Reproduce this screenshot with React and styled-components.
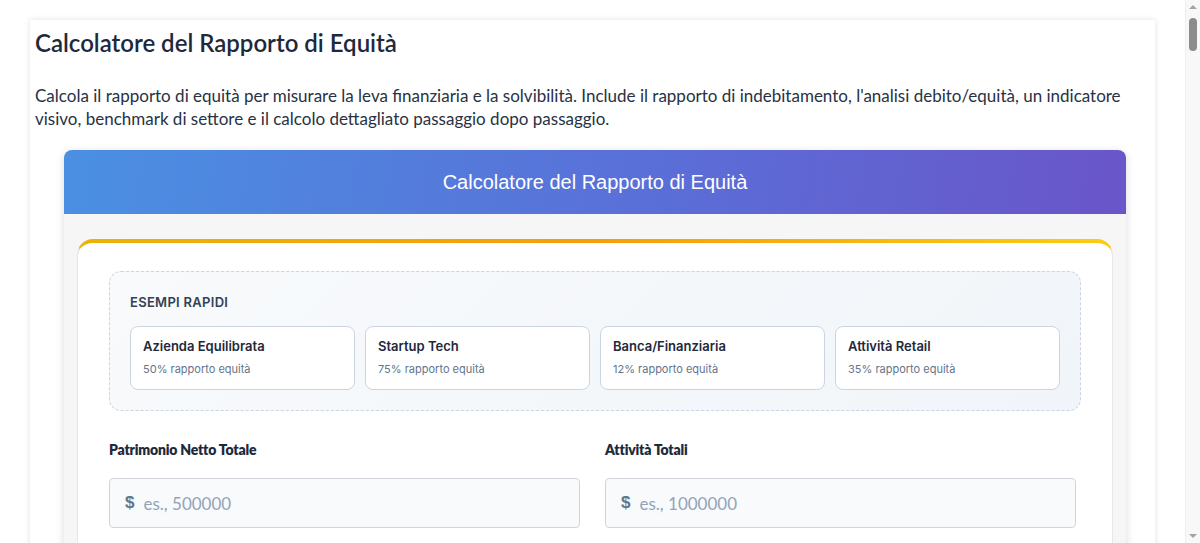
import React from 'react';
import styled, { createGlobalStyle } from 'styled-components';

const GlobalStyle = createGlobalStyle`
    * { box-sizing: border-box; }
    body {
        margin: 0;
        background: #fff;
        font-family: Lato, "Noto Sans", sans-serif;
        color: #1e293b;
    }
`;

// the screenshot shows the browser's classic scrollbar; it is drawn over the page edge
const ScrollTrack = styled.div`
    position: fixed;
    top: 0;
    right: 0;
    width: 15px;
    height: 100vh;
    background: #f8f8f8;
    border-left: 1px solid #efefef;
`;

const ScrollArrow = styled.div`
    position: absolute;
    left: 3px;
    width: 0;
    height: 0;
    border-left: 4px solid transparent;
    border-right: 4px solid transparent;
    ${props => props.down
        ? 'bottom: 5px; border-top: 4px solid #a3a3a3;'
        : 'top: 5px; border-bottom: 4px solid #a3a3a3;'}
`;

const ScrollThumb = styled.div`
    position: absolute;
    top: 18px;
    left: 3px;
    width: 8px;
    height: 33px;
    border-radius: 4px;
    background: #8c8c8c;
`;

const Page = styled.div`
    padding: 20px 45px 40px 30px;
`;

const Article = styled.article`
    background: #fff;
    box-shadow: 0 0 6px rgba(0, 0, 0, 0.12);
    padding: 8px 5px 40px;
    min-height: 8600px;
`;

const Title = styled.h1`
    margin: 0;
    font-family: Lato, sans-serif;
    font-size: 24px;
    font-weight: 600;
    line-height: 30px;
    color: #1e293b;
`;

const Intro = styled.p`
    margin: 26px 0 20px;
    font-size: 17px;
    line-height: 23px;
    color: #273244;
`;

const Calculator = styled.section`
    margin: 0 24px 0 29px;
    border-radius: 8px;
    overflow: hidden;
    background: #f6f6f6;
    box-shadow: 0 2px 8px rgba(0, 0, 0, 0.15);
`;

const Header = styled.header`
    height: 64px;
    display: flex;
    align-items: center;
    justify-content: center;
    background: linear-gradient(100deg, #4a90e2 0%, #5a6fd8 55%, #6a55c9 100%);
    color: #fff;
    font-family: "Liberation Sans", Arial, sans-serif;
    font-size: 20px;
`;

const Body = styled.div`
    padding: 25px 13px 30px;
`;

const Card = styled.div`
    background: #fff;
    border-radius: 16px;
    border: 1px solid #e5e7eb;
    border-top: 4px solid transparent;
    background-image: linear-gradient(#fff, #fff), linear-gradient(90deg, #eab308, #f59e0b 50%, #facc15);
    background-origin: border-box;
    background-clip: padding-box, border-box;
    padding: 28px 31px 32px;
`;

const Examples = styled.div`
    border: 1px dashed #cbd5e1;
    border-radius: 12px;
    background: linear-gradient(135deg, #f8fafc, #f1f5f9);
    padding: 22px 20px 20px;
`;

const ExamplesTitle = styled.div`
    font-family: Inter, sans-serif;
    font-size: 13px;
    font-weight: 600;
    letter-spacing: 0.3px;
    text-transform: uppercase;
    color: #334155;
    margin-bottom: 16px;
`;

const ExampleGrid = styled.div`
    display: grid;
    grid-template-columns: repeat(4, 1fr);
    gap: 10px;
`;

const ExampleButton = styled.button`
    height: 64px;
    text-align: left;
    background: #fff;
    border: 1px solid #cbd5e1;
    border-radius: 8px;
    padding: 11px 12px;
    font-family: Inter, sans-serif;
    cursor: pointer;
    display: flex;
    flex-direction: column;
    gap: 8px;
`;

const ExampleName = styled.span`
    font-size: 13px;
    font-weight: 600;
    color: #1e293b;
`;

const ExampleNote = styled.span`
    font-size: 11px;
    color: #64748b;
`;

const Fields = styled.div`
    display: grid;
    grid-template-columns: 1fr 1fr;
    column-gap: 25px;
    row-gap: 24px;
    margin: 30px 5px 0 0;
`;

const Field = styled.div`
    display: flex;
    flex-direction: column;
    gap: 20px;
`;

const Label = styled.label`
    font-family: Lato, sans-serif;
    font-size: 14px;
    font-weight: 800;
    color: #1e293b;
    letter-spacing: -0.2px;
`;

const InputBox = styled.div`
    height: 50px;
    display: flex;
    align-items: center;
    gap: 7px;
    padding: 0 15px;
    background: #f8fafc;
    border: 1px solid #d1d5db;
    border-radius: 4px;
`;

const Currency = styled.span`
    font-family: "Liberation Sans", Arial, sans-serif;
    font-weight: 700;
    font-size: 17px;
    color: #64748b;
`;

const Input = styled.input`
    flex: 1;
    border: none;
    outline: none;
    background: transparent;
    font-family: Lato, sans-serif;
    font-size: 17px;
    color: #1e293b;
    &::placeholder { color: #94a3b8; }
`;

const examples = [
    { name: 'Azienda Equilibrata', note: '50% rapporto equità' },
    { name: 'Startup Tech', note: '75% rapporto equità' },
    { name: 'Banca/Finanziaria', note: '12% rapporto equità' },
    { name: 'Attività Retail', note: '35% rapporto equità' },
];

const fields = [
    { label: 'Patrimonio Netto Totale', placeholder: 'es., 500000' },
    { label: 'Attività Totali', placeholder: 'es., 1000000' },
    { label: 'Passività Totali', placeholder: 'es., 500000' },
    { label: 'Settore', placeholder: 'es., Tecnologia' },
];

const App = () => {
    return (
        <Page>
            <GlobalStyle />
            <Article>
                <Title>Calcolatore del Rapporto di Equità</Title>
                <Intro>
                    Calcola il rapporto di equità per misurare la leva finanziaria e la solvibilità. Include il rapporto di indebitamento, l'analisi debito/equità, un indicatore visivo, benchmark di settore e il calcolo dettagliato passaggio dopo passaggio.
                </Intro>
                <Calculator>
                    <Header>Calcolatore del Rapporto di Equità</Header>
                    <Body>
                        <Card>
                            <Examples>
                                <ExamplesTitle>Esempi Rapidi</ExamplesTitle>
                                <ExampleGrid>
                                    {examples.map(e => (
                                        <ExampleButton key={e.name}>
                                            <ExampleName>{e.name}</ExampleName>
                                            <ExampleNote>{e.note}</ExampleNote>
                                        </ExampleButton>
                                    ))}
                                </ExampleGrid>
                            </Examples>
                            <Fields>
                                {fields.map(f => (
                                    <Field key={f.label}>
                                        <Label>{f.label}</Label>
                                        <InputBox>
                                            <Currency>$</Currency>
                                            <Input placeholder={f.placeholder} />
                                        </InputBox>
                                    </Field>
                                ))}
                            </Fields>
                        </Card>
                    </Body>
                </Calculator>
            </Article>
            <ScrollTrack>
                <ScrollArrow />
                <ScrollThumb />
                <ScrollArrow down />
            </ScrollTrack>
        </Page>
    );
};

export default App;
